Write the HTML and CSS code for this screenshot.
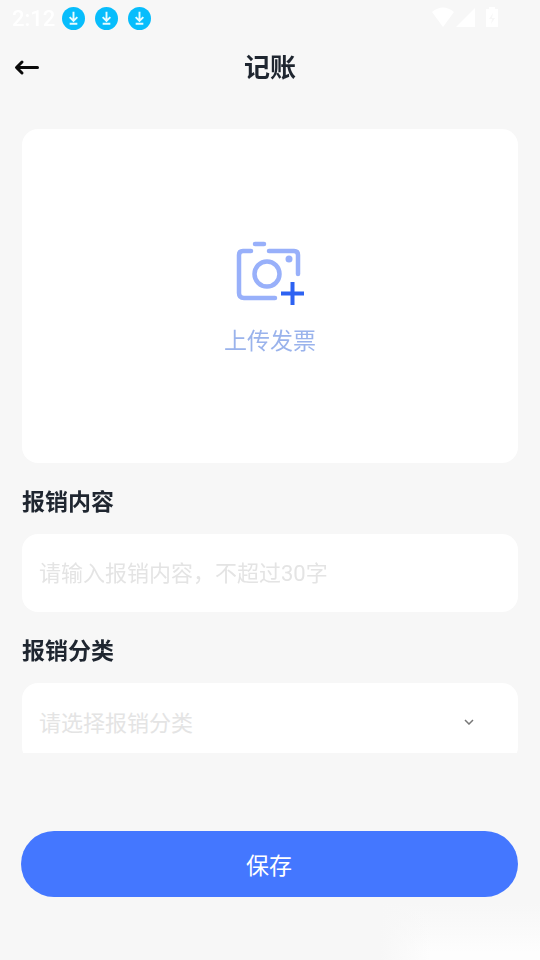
FILE: index.html
```html
<!DOCTYPE html>
<html lang="zh-CN">
<head>
<meta charset="utf-8">
<meta name="viewport" content="width=device-width, initial-scale=1">
<title>记账</title>
<link rel="stylesheet" href="styles.css">
</head>
<body>
<svg class="defs" aria-hidden="true">
  <symbol id="download" viewBox="0 0 24 24">
    <circle cx="12" cy="12" r="12" fill="#07bdfc"/>
    <path d="M12 5v9M8 10.500l4 4 4-4M8 17.500h8" fill="none" stroke="#e6fbff" stroke-width="2"/>
  </symbol>
</svg>
<div class="status">
  <span class="time">2:12</span>
  <svg class="badge" aria-hidden="true"><use href="#download"/></svg>
  <svg class="badge" aria-hidden="true"><use href="#download"/></svg>
  <svg class="badge" aria-hidden="true"><use href="#download"/></svg>
  <svg class="signals" viewBox="0 0 68 22" aria-hidden="true">
    <path d="M0 4Q11-5 22 4L11 19z M43 0v19H24z M54 1h3V-1h6v2h3v18H54z" fill="#fff"/>
    <path d="M61 5l-4 6h3l-1 5 4-6h-3z" fill="#f7f7f7"/>
  </svg>
</div>
<header class="header">
  <button class="back" type="button" aria-label="返回">
    <svg viewBox="0 0 26 18" aria-hidden="true"><path d="M23.500 9.500H3M8 4L2.500 9.500l5.500 5.500" fill="none" stroke="#0a0a0a" stroke-width="3" stroke-linecap="round" stroke-linejoin="round"/></svg>
  </button>
  <h1>记账</h1>
</header>
<form class="form">
  <main class="content">
    <button class="upload" type="button">
      <svg viewBox="0 0 72 66" aria-hidden="true">
        <g fill="none" stroke="#98b0fa" stroke-width="4.500" stroke-linecap="round">
          <path d="M21 4h9"/>
          <path d="M17 11H9q-4 0-4 4v38q0 5 5 5h31"/>
          <path d="M35 11h25q4 0 4 4v19"/>
          <circle cx="33" cy="34" r="12.500"/>
        </g>
        <circle cx="55" cy="19" r="3.500" fill="#98b0fa"/>
        <path d="M58.500 42v23M47 53.500h23" stroke="#2d62f2" stroke-width="4"/>
      </svg>
      <span>上传发票</span>
    </button>
    <label class="label" for="content">报销内容</label>
    <input class="field" id="content" type="text" placeholder="请输入报销内容，不超过30字">
    <label class="label" for="category">报销分类</label>
    <div class="picker">
      <select class="field" id="category"><option value="">请选择报销分类</option></select>
      <svg class="chevron" viewBox="0 0 10 6" aria-hidden="true"><path d="M1 1l4 4 4-4" fill="none" stroke="#777" stroke-width="1.500"/></svg>
    </div>
  </main>
  <footer class="footer"><button class="save" type="submit">保存</button></footer>
</form>
<div class="glow"></div>
</body>
</html>
```
FILE: styles.css
```css
* { box-sizing: border-box; }

body {
  margin: 0;
  height: 100vh;
  display: flex;
  flex-direction: column;
  overflow: hidden;
  background: #f7f7f7;
  color: #1f2630;
  font-family: Roboto, "Noto Sans CJK SC", sans-serif;
}

button, input, select {
  font: inherit;
  border: 0;
  margin: 0;
}

.defs { position: absolute; width: 0; height: 0; }

.status {
  display: flex;
  align-items: center;
  gap: 10px;
  height: 37px;
  padding: 0 40px 0 12px;
}

.time {
  width: 40px;
  color: #fff;
  font-size: 22px;
  font-weight: 500;
  line-height: 36px;
}

.badge { width: 23px; height: 23px; }
.signals { width: 68px; height: 22px; margin-left: auto; overflow: visible; }

.header {
  display: grid;
  grid-template-columns: 60px 1fr 60px;
  align-items: center;
  height: 60px;
}

.back {
  height: 60px;
  padding: 0 0 0 14px;
  background: none;
}

.back svg { display: block; width: 26px; height: 18px; }

h1 {
  margin: 0;
  padding-top: 2px;
  font-size: 26px;
  line-height: 38px;
  font-weight: 700;
  text-align: center;
}

.form {
  flex: 1;
  min-height: 0;
  display: flex;
  flex-direction: column;
}

.content {
  flex: 1;
  min-height: 0;
  overflow: hidden;
  padding: 32px 22px 0;
}

.upload {
  display: flex;
  flex-direction: column;
  align-items: center;
  justify-content: center;
  gap: 19px;
  width: 100%;
  height: 334px;
  padding: 7px 0 0;
  border-radius: 16px;
  background: #fff;
  color: #9ab3ec;
  font-size: 23px;
  line-height: 34px;
}

.upload svg { width: 72px; height: 66px; }

.label {
  display: block;
  padding: 23px 0 15px;
  font-size: 23px;
  line-height: 33px;
  font-weight: 700;
}

.field {
  display: block;
  width: 100%;
  height: 78px;
  padding: 0 17px;
  border-radius: 16px;
  background: #fff;
  color: #e4e4e4;
  font-size: 22px;
  appearance: none;
}

.field::placeholder { color: #e4e4e4; opacity: 1; }

.picker { position: relative; }
.picker .field { height: 80px; }

.chevron {
  position: absolute;
  right: 44px;
  top: 36px;
  width: 10px;
  height: 6px;
  pointer-events: none;
}

.footer { padding: 78px 22px 63px 21px; }

.save {
  display: block;
  width: 100%;
  height: 66px;
  padding: 0 1px 1px 0;
  border-radius: 33px;
  background: #4477ff;
  color: #fff;
  font-size: 23px;
}

.glow {
  position: fixed;
  right: 0;
  bottom: 0;
  width: 160px;
  height: 56px;
  background:
    linear-gradient(to right, #f7f7f7, rgba(247, 247, 247, 0) 50px),
    linear-gradient(#f7f7f7, #fdfdfd 48px);
  z-index: -1;
}
```
